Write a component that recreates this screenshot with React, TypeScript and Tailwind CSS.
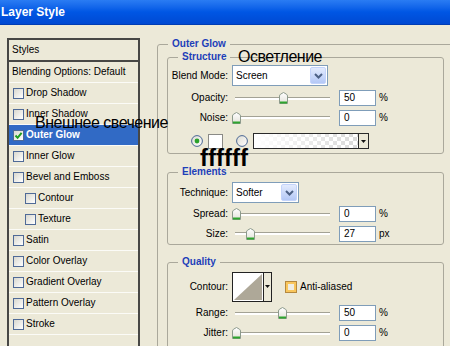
import type { ReactNode } from 'react'

interface StyleItem {
  name: string
  sub?: boolean
  active?: boolean
}

const styleItems: StyleItem[] = [
  { name: 'Drop Shadow' },
  { name: 'Inner Shadow' },
  { name: 'Outer Glow', active: true },
  { name: 'Inner Glow' },
  { name: 'Bevel and Emboss' },
  { name: 'Contour', sub: true },
  { name: 'Texture', sub: true },
  { name: 'Satin' },
  { name: 'Color Overlay' },
  { name: 'Gradient Overlay' },
  { name: 'Pattern Overlay' },
  { name: 'Stroke' },
]

function CheckBox({ checked = false }: { checked?: boolean }) {
  return (
    <div className="w-[11px] h-[11px] shrink-0 border border-[#4f6a97] bg-linear-to-br from-[#d9d8cf] to-white flex items-center justify-center">
      {checked && (
        <svg width="9" height="9" viewBox="0 0 9 9">
          <path d="M1.5 4.5 L3.6 6.8 L7.6 1.8" stroke="#1f9e1f" strokeWidth="2" fill="none" />
        </svg>
      )}
    </div>
  )
}

function StylesPanel() {
  return (
    <div className="w-[133px] shrink-0 border-2 border-[#474745] text-[10px] leading-none">
      <div className="h-[20px] flex items-center pl-[3px]">Styles</div>
      <div className="h-[2px] bg-[#474745]" />
      <div className="h-[21px] flex items-center pl-[3px] border-b border-[#fbfbf7]">
        Blending Options: Default
      </div>
      {styleItems.map((item) => (
        <div
          key={item.name}
          className={`h-[21px] flex items-center border-b border-[#fbfbf7] ${item.sub ? 'pl-[16px]' : 'pl-[4px]'} ${
            item.active ? 'bg-[#316ac5] text-white font-bold' : ''
          }`}
        >
          <CheckBox checked={item.active} />
          <span className="ml-[2px]">{item.name}</span>
        </div>
      ))}
      <div className="h-[21px] border-b border-[#fbfbf7]" />
    </div>
  )
}

function Group({ title, className, children }: { title: string; className: string; children: ReactNode }) {
  return (
    <fieldset className={`border border-[#aaa89b] rounded-[3px] ${className}`}>
      <legend className="ml-[10px] px-[4px] text-[10px] leading-[12px] font-bold text-[#1e3fb9]">{title}</legend>
      {children}
    </fieldset>
  )
}

function Row({ label, className, children }: { label: string; className: string; children: ReactNode }) {
  return (
    <div className={`flex items-center ${className}`}>
      <span className="w-[60px] shrink-0 text-right text-[10px] leading-none">{label}</span>
      <div className="ml-[4px] flex items-center">{children}</div>
    </div>
  )
}

function Select({ value, width }: { value: string; width: string }) {
  return (
    <div className={`h-[21px] flex items-center justify-between border border-[#7f9db9] bg-white ${width}`}>
      <span className="pl-[3px] text-[10px] leading-none">{value}</span>
      <div className="mr-[1px] w-[16px] h-[17px] rounded-[2px] border border-[#c4d4fb] bg-linear-to-b from-[#e3ebfd] to-[#b4c8f6] flex items-center justify-center">
        <svg width="9" height="6" viewBox="0 0 9 6">
          <path d="M1 1 L4.5 4.5 L8 1" stroke="#4d6185" strokeWidth="2" fill="none" />
        </svg>
      </div>
    </div>
  )
}

function Slider({ pos }: { pos: number }) {
  return (
    <div className="relative w-[100px] h-[14px] flex items-center">
      <div className="ml-[3px] w-[95px] h-[3px] border-t border-[#a3a295] bg-white" />
      <svg className="absolute top-[1px]" style={{ left: pos - 4.5 }} width="9" height="12" viewBox="0 0 9 12">
        <defs>
          <linearGradient id="thumb" x1="0" y1="0" x2="0" y2="1">
            <stop offset="0" stopColor="#ffffff" />
            <stop offset="1" stopColor="#e3e2da" />
          </linearGradient>
        </defs>
        <path d="M0.5 4 Q0.5 3 1.5 2.2 L4.5 0.5 L7.5 2.2 Q8.5 3 8.5 4 V11.5 H0.5 Z" fill="url(#thumb)" stroke="#8c9a8c" />
        <rect x="1" y="9.5" width="7" height="2" fill="#2ea52e" />
      </svg>
    </div>
  )
}

function NumberField({ value, unit }: { value: string; unit: string }) {
  return (
    <>
      <div className="ml-[7px] w-[37px] h-[16px] border border-[#7f9db9] bg-white pl-[4px] text-[10px] leading-[14px]">
        {value}
      </div>
      <span className="ml-[3px] text-[10px] leading-none">{unit}</span>
    </>
  )
}

function Radio({ on = false, className = '' }: { on?: boolean; className?: string }) {
  return (
    <svg className={className} width="12" height="12" viewBox="0 0 12 12">
      <defs>
        <linearGradient id="radioFill" x1="0" y1="0" x2="1" y2="1">
          <stop offset="0" stopColor="#dcdbd2" />
          <stop offset="1" stopColor="#ffffff" />
        </linearGradient>
      </defs>
      <circle cx="6" cy="6" r="5.4" fill="url(#radioFill)" stroke="#4a6794" />
      {on && <circle cx="6" cy="6" r="2.4" fill="#2aa12a" />}
    </svg>
  )
}

function GradientPreview() {
  return (
    <svg className="ml-[5px]" width="116" height="16" viewBox="0 0 116 16">
      <defs>
        <pattern id="checks" width="8" height="8" patternUnits="userSpaceOnUse">
          <rect width="8" height="8" fill="#ffffff" />
          <rect width="4" height="4" fill="#d9d9d9" />
          <rect x="4" y="4" width="4" height="4" fill="#d9d9d9" />
        </pattern>
        <linearGradient id="fade" x1="0" y1="0" x2="1" y2="0">
          <stop offset="0" stopColor="#ffffff" stopOpacity="1" />
          <stop offset="1" stopColor="#ffffff" stopOpacity="0" />
        </linearGradient>
      </defs>
      <rect x="1" y="1" width="104" height="14" fill="url(#checks)" />
      <rect x="1" y="1" width="104" height="14" fill="url(#fade)" />
      <rect x="105" y="1" width="10" height="14" fill="#ece9d8" />
      <line x1="105.5" y1="1" x2="105.5" y2="15" stroke="#2a2a2a" />
      <path d="M108 7 H113 L110.5 10 Z" fill="#111" />
      <rect x="0.5" y="0.5" width="115" height="15" fill="none" stroke="#2a2a2a" />
    </svg>
  )
}

function ContourPreview() {
  return (
    <svg width="40" height="30" viewBox="0 0 40 30">
      <rect x="1" y="1" width="30" height="28" fill="#ffffff" />
      <path d="M2 28 L30 2 V28 Z" fill="#aea898" />
      <rect x="31" y="1" width="8" height="28" fill="#ece9d8" />
      <line x1="31.5" y1="1" x2="31.5" y2="29" stroke="#222" />
      <path d="M33 13 H38 L35.5 16 Z" fill="#111" />
      <rect x="0.5" y="0.5" width="39" height="29" fill="none" stroke="#222" />
    </svg>
  )
}

export default function App() {
  return (
    <div className="relative w-[450px] h-[346px] overflow-hidden bg-[#ece9d8] text-black font-['Liberation_Sans',Arial,sans-serif]">
      {/* Title bar */}
      <div className="h-[25px] flex items-center pl-[1px] bg-linear-to-b from-[#2a7cf3] via-[#0056e4] to-[#0049d2] border-b border-[#003cb4]">
        <span className="text-white font-bold text-[12px] leading-none">Layer Style</span>
      </div>

      <div className="flex items-start pt-[13px] pl-[7px]">
        <StylesPanel />

        <div className="ml-[17px] shrink-0">
          <Group title="Outer Glow" className="w-[297px] pb-[30px]">
            <Group title="Structure" className="mx-[9px] mt-[1px] pb-[2px]">
              <Row label="Blend Mode:" className="mt-[2px] h-[21px]">
                <Select value="Screen" width="w-[96px]" />
              </Row>
              <Row label="Opacity:" className="mt-[2px] h-[20px]">
                <Slider pos={51} />
                <NumberField value="50" unit="%" />
              </Row>
              <Row label="Noise:" className="h-[19px]">
                <Slider pos={4} />
                <NumberField value="0" unit="%" />
              </Row>
              <div className="mt-[4px] h-[20px] flex items-center pl-[23px]">
                <Radio on />
                <div className="ml-[5px] w-[15px] h-[15px] border border-[#8a8a86] bg-white" />
                <Radio className="ml-[13px]" />
                <GradientPreview />
              </div>
            </Group>

            <Group title="Elements" className="mx-[9px] mt-[12px] pb-[1px]">
              <Row label="Technique:" className="mt-[4px] h-[21px]">
                <Select value="Softer" width="w-[67px]" />
              </Row>
              <Row label="Spread:" className="mt-[1px] h-[20px]">
                <Slider pos={4} />
                <NumberField value="0" unit="%" />
              </Row>
              <Row label="Size:" className="h-[19px]">
                <Slider pos={18} />
                <NumberField value="27" unit="px" />
              </Row>
            </Group>

            <Group title="Quality" className="mx-[9px] mt-[11px] pb-[20px]">
              <Row label="Contour:" className="mt-[4px] h-[30px]">
                <ContourPreview />
                <div className="ml-[13px] w-[12px] h-[12px] border border-[#b5893f] bg-[#eeede4] shadow-[inset_0_0_0_2px_#f9c65c]" />
                <span className="ml-[3px] text-[10px] leading-none">Anti-aliased</span>
              </Row>
              <Row label="Range:" className="mt-[1px] h-[20px]">
                <Slider pos={50} />
                <NumberField value="50" unit="%" />
              </Row>
              <Row label="Jitter:" className="h-[20px]">
                <Slider pos={4} />
                <NumberField value="0" unit="%" />
              </Row>
            </Group>
          </Group>
        </div>
      </div>

      {/* Annotations written over the dialog */}
      <span className="absolute left-[238px] top-[49px] text-[16px] leading-[16px] tracking-[-0.5px] whitespace-nowrap">
        Осветление
      </span>
      <span className="absolute left-[35px] top-[115px] text-[16px] leading-[16px] tracking-[-0.5px] whitespace-nowrap">
        Внешнее свечение
      </span>
      <span className="absolute left-[200px] top-[146px] text-[24px] leading-[24px] font-bold whitespace-nowrap">
        ffffff
      </span>
    </div>
  )
}
